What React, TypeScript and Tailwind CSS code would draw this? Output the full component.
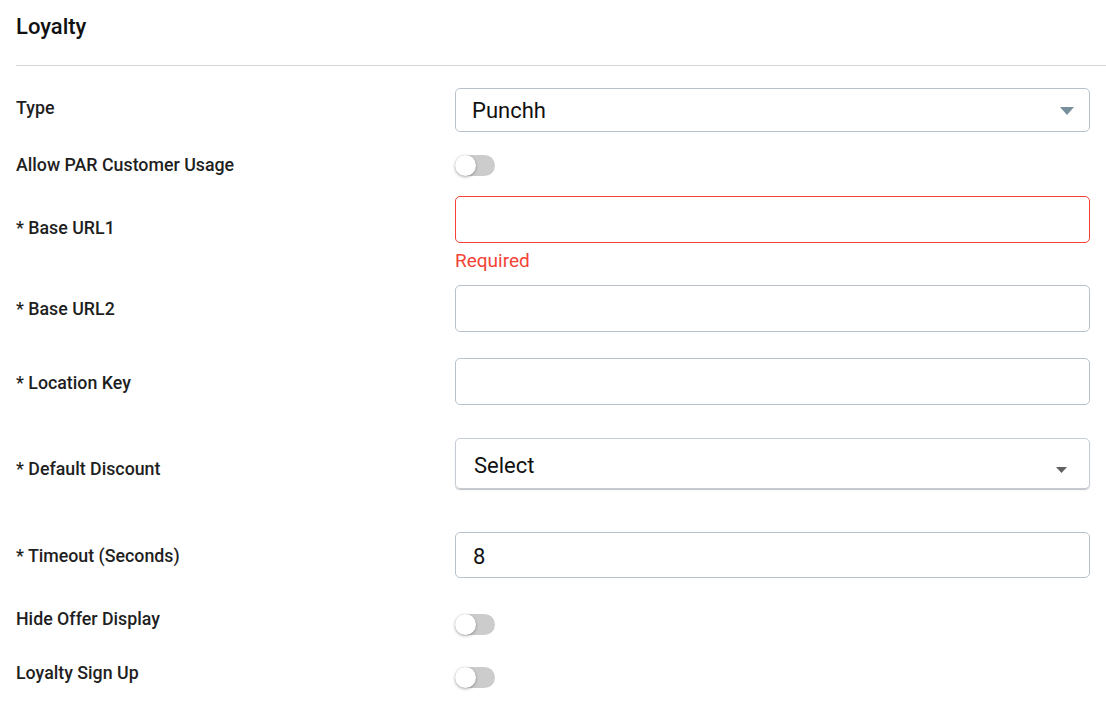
import React from "react";

function Toggle() {
  return (
    <div className="relative h-[21px] w-[40px] rounded-full bg-[#cccccc]">
      <div className="absolute left-0 top-0 h-[21px] w-[21px] rounded-full bg-white shadow-[0_1px_3px_rgba(0,0,0,0.35)]" />
    </div>
  );
}

function Label({ text, offset }: { text: string; offset: string }) {
  return (
    <div className={`w-[439px] shrink-0 text-[17.8px] font-medium leading-[24px] text-[#1f1f1f] ${offset}`}>
      {text}
    </div>
  );
}

function TextInput({ value = "", error = false, height = "h-[47px]" }: { value?: string; error?: boolean; height?: string }) {
  return (
    <div
      className={`flex ${height} w-full items-center rounded-[5px] border bg-white pl-[17px] pt-[2px] text-[22px] text-[#111] ${
        error ? "border-[#f44336]" : "border-[#b9c2cc]"
      }`}
    >
      {value}
    </div>
  );
}

export default function App() {
  return (
    <div className="min-h-[702px] bg-white pt-[13px] pl-4" style={{ fontFamily: "Roboto, 'Liberation Sans', sans-serif" }}>
      <h1 className="text-[22px] font-medium leading-[28px] text-[#111]">Loyalty</h1>
      <div className="mt-[24px] border-t border-[#d4d4d4]" />

      <div className="pr-4">
        {/* Type */}
        <div className="mt-[22px] flex items-start">
          <Label text="Type" offset="mt-[8px]" />
          <div className="flex h-[44px] flex-1 items-center justify-between rounded-[5px] border border-[#b9c2cc] pl-[16px] pr-[15px] pt-[1px] text-[22px] text-[#111]">
            <span>Punchh</span>
            <svg width="14" height="8" viewBox="0 0 14 8">
              <path d="M0 0 L14 0 L7 8 Z" fill="#78909c" />
            </svg>
          </div>
        </div>

        {/* Allow PAR Customer Usage */}
        <div className="mt-[20px] flex items-start">
          <Label text="Allow PAR Customer Usage" offset="mt-[1px]" />
          <div className="mt-[3px]">
            <Toggle />
          </div>
        </div>

        {/* Base URL1 */}
        <div className="mt-[19px] flex items-start">
          <Label text="* Base URL1" offset="mt-[20px]" />
          <div className="flex-1">
            <TextInput error />
            <div className="mt-[6px] text-[19px] leading-[24px] text-[#f44336]">Required</div>
          </div>
        </div>

        {/* Base URL2 */}
        <div className="mt-[12px] flex items-start">
          <Label text="* Base URL2" offset="mt-[12px]" />
          <div className="flex-1">
            <TextInput />
          </div>
        </div>

        {/* Location Key */}
        <div className="mt-[26px] flex items-start">
          <Label text="* Location Key" offset="mt-[13px]" />
          <div className="flex-1">
            <TextInput />
          </div>
        </div>

        {/* Default Discount */}
        <div className="mt-[33px] flex items-start">
          <Label text="* Default Discount" offset="mt-[19px]" />
          <div className="flex h-[51px] flex-1 items-start justify-between rounded-[5px] border border-[#c5ccd4] pl-[18px] pr-[22px] pt-[13px] text-[22px] leading-[28px] text-[#111] shadow-[0_1px_1px_rgba(0,0,0,0.25)]">
            <span>Select</span>
            <svg width="11" height="6" viewBox="0 0 11 6" className="mt-[15px]">
              <path d="M0 0 L11 0 L5.5 6 Z" fill="#616161" />
            </svg>
          </div>
        </div>

        {/* Timeout */}
        <div className="mt-[43px] flex items-start">
          <Label text="* Timeout (Seconds)" offset="mt-[12px]" />
          <div className="flex-1">
            <TextInput value="8" height="h-[46px]" />
          </div>
        </div>

        {/* Hide Offer Display */}
        <div className="mt-[28px] flex items-start">
          <Label text="Hide Offer Display" offset="mt-[1px]" />
          <div className="mt-[8px]">
            <Toggle />
          </div>
        </div>

        {/* Loyalty Sign Up */}
        <div className="mt-[25px] flex items-start">
          <Label text="Loyalty Sign Up" offset="mt-[1px]" />
          <div className="mt-[7px]">
            <Toggle />
          </div>
        </div>
      </div>
    </div>
  );
}
